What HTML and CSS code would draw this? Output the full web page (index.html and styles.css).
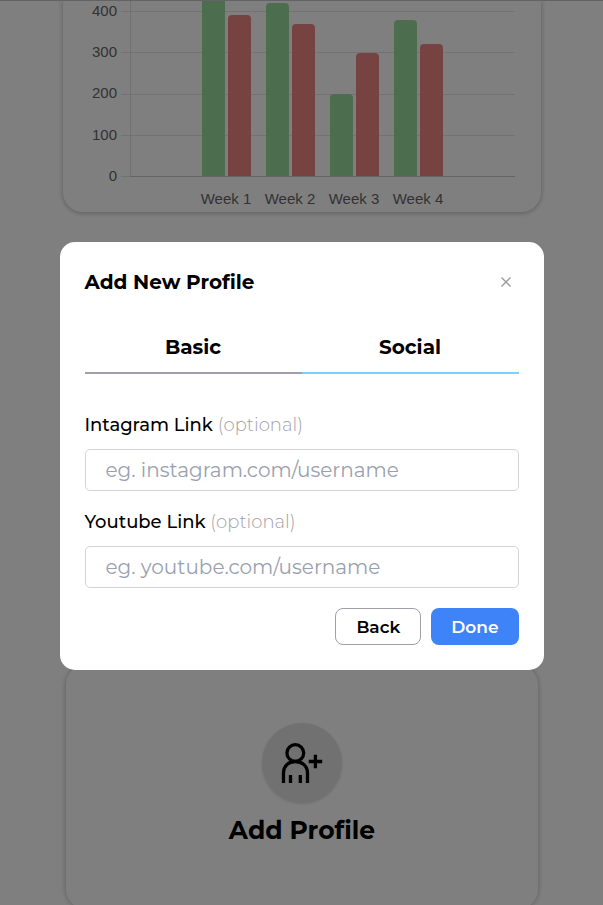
FILE: index.html
```html
<!DOCTYPE html>
<html lang="en">
<head>
<meta charset="utf-8">
<meta name="viewport" content="width=device-width, initial-scale=1">
<title>Add New Profile</title>
<link rel="stylesheet" href="styles.css">
</head>
<body>
<main class="page">
  <section class="card chart-card">
    <svg class="chart" viewBox="0 0 478 211" role="img" aria-label="Weekly activity">
      <g class="grid">
        <path d="M58 10.5H452M58 51.5H452M58 93.5H452M58 134.5H452M67.5 0V175"/>
        <path class="axis" d="M67 175.5H452"/>
        <path d="M58 175.5H67"/>
      </g>
      <g class="guest">
        <path d="M139 175V0h23V175z"/>
        <path d="M203 175V6q0-4 4-4h15q4 0 4 4V175z"/>
        <path d="M267 175V97q0-4 4-4h15q4 0 4 4V175z"/>
        <path d="M331 175V23q0-4 4-4h15q4 0 4 4V175z"/>
      </g>
      <g class="user">
        <path d="M165 175V18q0-4 4-4h15q4 0 4 4V175z"/>
        <path d="M229 175V27q0-4 4-4h15q4 0 4 4V175z"/>
        <path d="M293 175V56q0-4 4-4h15q4 0 4 4V175z"/>
        <path d="M357 175V47q0-4 4-4h15q4 0 4 4V175z"/>
      </g>
      <g class="ticks ticks-y">
        <text x="54" y="15">400</text>
        <text x="54" y="56">300</text>
        <text x="54" y="97">200</text>
        <text x="54" y="139">100</text>
        <text x="54" y="180">0</text>
      </g>
      <g class="ticks ticks-x">
        <text x="163" y="203">Week 1</text>
        <text x="227" y="203">Week 2</text>
        <text x="291" y="203">Week 3</text>
        <text x="355" y="203">Week 4</text>
      </g>
    </svg>
  </section>
  <section class="card add-card">
    <button class="add-button" type="button">
      <span class="add-circle">
        <svg class="add-icon" viewBox="0 0 42 42" aria-hidden="true">
          <circle cx="14.300" cy="11" r="8.400"/>
          <path d="M2.500 41V31c0-7 5-11.500 11.800-11.500S26.500 24 26.500 31v10M9.500 33v8M19.300 33v8M27.700 19.500h13.500M34.400 12.750v13.500"/>
        </svg>
      </span>
      <span class="add-label">Add Profile</span>
    </button>
  </section>
</main>
<div class="overlay">
  <form class="modal" role="dialog" aria-labelledby="modal-title">
    <header class="modal-header">
      <h2 class="modal-title" id="modal-title">Add New Profile</h2>
      <button class="close" type="button" aria-label="Close">
        <svg class="close-icon" viewBox="0 0 10 10" aria-hidden="true"><path d="M.5.5l9 9M9.500.5l-9 9"/></svg>
      </button>
    </header>
    <div class="tabs" role="tablist">
      <button class="tab" type="button" role="tab" aria-selected="false">Basic</button>
      <button class="tab tab-active" type="button" role="tab" aria-selected="true">Social</button>
    </div>
    <div class="field">
      <label class="label" for="instagram">Intagram Link <span class="optional">(optional)</span></label>
      <input class="input" id="instagram" type="text" placeholder="eg. instagram.com/username">
    </div>
    <div class="field">
      <label class="label" for="youtube">Youtube Link <span class="optional">(optional)</span></label>
      <input class="input" id="youtube" type="text" placeholder="eg. youtube.com/username">
    </div>
    <div class="actions">
      <button class="button" type="button">Back</button>
      <button class="button button-primary" type="submit">Done</button>
    </div>
  </form>
</div>
</body>
</html>
```
FILE: styles.css
```css
* {
  box-sizing: border-box;
}

body {
  margin: 0;
  overflow: hidden;
  background: #fff;
  color: #000;
  font-family: Montserrat, "Open Sans", sans-serif;
}

button,
input {
  font-family: inherit;
  color: inherit;
}

.page {
  min-height: 100vh;
  padding: 0 62px 0 63px;
  border-top: 1px solid #c4c4cc;
}

.card {
  border-radius: 20px;
}

.chart-card {
  overflow: hidden;
  border-radius: 0 0 20px 20px;
  box-shadow: 0 1px 4px 1px #ccc;
}

.chart {
  display: block;
  width: 100%;
}

.grid {
  fill: none;
  stroke: #e5e5e5;
}

.axis {
  stroke: #c8c8c8;
}

.guest {
  fill: #9bdb9f;
}

.user {
  fill: #ee8484;
}

.ticks {
  fill: #666;
  font-family: "Liberation Sans", Arial, sans-serif;
  font-size: 15px;
}

.ticks-y {
  text-anchor: end;
}

.ticks-x {
  text-anchor: middle;
}

.add-card {
  display: flex;
  justify-content: center;
  height: 244px;
  margin: 453px 3px 0;
  padding-top: 58px;
  box-shadow: 0 0 5px 1px #ccc;
}

.add-button {
  display: flex;
  flex-direction: column;
  align-items: center;
  align-self: flex-start;
  gap: 11px;
  padding: 0;
  border: 0;
  background: none;
}

.add-circle {
  display: grid;
  place-items: center;
  width: 80px;
  height: 80px;
  border-radius: 50%;
  background: #e2e2e2;
  box-shadow: 0 1px 3px #ddd;
}

.add-icon {
  width: 42px;
  height: 42px;
  fill: none;
  stroke: #000;
  stroke-width: 3.3;
}

.add-label {
  font-size: 25px;
  font-weight: 700;
  line-height: 32px;
}

.overlay {
  position: fixed;
  inset: 0;
  display: grid;
  place-items: center;
  padding: 7px 16px 0;
  background: rgb(0 0 0 / 50%);
}

.modal {
  width: 100%;
  max-width: 484px;
  padding: 25px;
  border-radius: 15px;
  background: #fff;
}

.modal-header {
  display: flex;
  align-items: center;
  justify-content: space-between;
  height: 30px;
}

.modal-title {
  margin: 0;
  font-size: 20px;
  font-weight: 700;
  line-height: 30px;
}

.close {
  display: grid;
  place-items: center;
  width: 26px;
  height: 26px;
  padding: 0;
  border: 0;
  background: none;
}

.close-icon {
  width: 10px;
  height: 10px;
  fill: none;
  stroke: #999;
  stroke-width: 1.3;
}

.tabs {
  display: grid;
  grid-template-columns: 1fr 1fr;
  margin: 24px 0 40px;
}

.tab {
  height: 53px;
  padding: 0;
  border: 0;
  border-bottom: 2px solid #9f9fa9;
  background: none;
  font-size: 20px;
  font-weight: 700;
}

.tab-active {
  border-color: #74d4ff;
}

.field {
  margin-bottom: 20px;
}

.label {
  display: block;
  margin-bottom: 13px;
  font-size: 18px;
  font-weight: 500;
  line-height: 22px;
}

.optional {
  color: #9f9fa9;
  font-weight: 300;
}

.input {
  display: block;
  width: 100%;
  height: 42px;
  padding: 0 20px;
  border: 1px solid #d4d4d4;
  border-radius: 5px;
  background: #fff;
  font-size: 20px;
}

.input::placeholder {
  color: #99a1af;
  opacity: 1;
}

.actions {
  display: flex;
  justify-content: flex-end;
  gap: 10px;
}

.button {
  height: 37px;
  padding: 0 20px;
  border: 1px solid #9f9fa9;
  border-radius: 8px;
  background: #fff;
  font-size: 17px;
  font-weight: 600;
}

.button-primary {
  border: 0;
  background: #3f83f8;
  color: #fff;
}
```
